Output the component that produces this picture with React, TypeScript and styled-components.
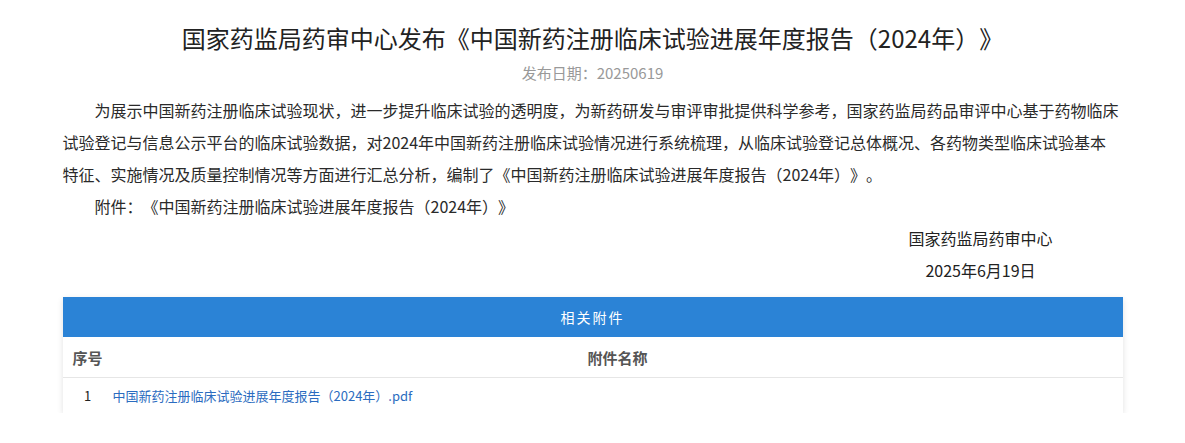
import React from 'react'
import styled, { createGlobalStyle } from 'styled-components'

const GlobalStyle = createGlobalStyle`
  body {
    margin: 0;
    background: #fff;
    font-family: "Noto Sans CJK SC", "Noto Sans", sans-serif;
    color: #333;
    text-spacing-trim: space-all;
  }
`

const Page = styled.div`
  width: 1060px;
  margin: 0 auto;
  padding-top: 18px;
`

const Title = styled.h1`
  margin: 0;
  font-size: 24px;
  line-height: 40px;
  font-weight: 400;
  color: #222;
  text-align: center;
`

const PubDate = styled.div`
  font-size: 15px;
  line-height: 30px;
  color: #999;
  text-align: center;
  margin-bottom: 6px;
`

const Para = styled.p`
  margin: 0;
  padding-right: 2px;
  font-size: 16px;
  line-height: 32px;
  text-indent: 2em;
  color: #2a2a2a;
`

const Sign = styled.div`
  display: flex;
  justify-content: flex-end;
  padding-right: 70px;
  margin-bottom: 11px;
`

const SignBlock = styled.div`
  text-align: center;
  font-size: 16px;
  line-height: 32px;
  color: #222;
`

const Table = styled.div`
  background: #fff;
  box-shadow: 0 2px 6px rgba(0, 0, 0, 0.12);
`

const Caption = styled.div`
  height: 40px;
  line-height: 40px;
  background: #2b83d6;
  color: #fff;
  font-size: 14px;
  letter-spacing: 2px;
  text-align: center;
`

const Row = styled.div<{ $head?: boolean }>`
  display: grid;
  grid-template-columns: 50px 1fr;
  align-items: center;
  height: ${(p) => (p.$head ? '40px' : '35px')};
  border-bottom: ${(p) => (p.$head ? '1px solid #e6e6e6' : 'none')};
`

const HeadCell = styled.div<{ $center?: boolean }>`
  font-size: 15px;
  font-weight: 700;
  color: #555;
  padding-left: ${(p) => (p.$center ? '0' : '10px')};
  text-align: ${(p) => (p.$center ? 'center' : 'left')};
`

const NumCell = styled.div`
  font-size: 13px;
  color: #222;
  text-align: center;
`

const FileLink = styled.a`
  font-size: 13px;
  color: #2b6cc0;
  text-decoration: none;
`

export default function App() {
  return (
    <>
      <GlobalStyle />
      <Page>
        <Title>国家药监局药审中心发布《中国新药注册临床试验进展年度报告（2024年）》</Title>
        <PubDate>发布日期：20250619</PubDate>
        <Para>
          为展示中国新药注册临床试验现状，进一步提升临床试验的透明度，为新药研发与审评审批提供科学参考，国家药监局药品审评中心基于药物临床试验登记与信息公示平台的临床试验数据，对2024年中国新药注册临床试验情况进行系统梳理，从临床试验登记总体概况、各药物类型临床试验基本特征、实施情况及质量控制情况等方面进行汇总分析，编制了《中国新药注册临床试验进展年度报告（2024年）》。
        </Para>
        <Para>附件：《中国新药注册临床试验进展年度报告（2024年）》</Para>
        <Sign>
          <SignBlock>
            <div>国家药监局药审中心</div>
            <div>2025年6月19日</div>
          </SignBlock>
        </Sign>
        <Table>
          <Caption>相关附件</Caption>
          <Row $head>
            <HeadCell>序号</HeadCell>
            <HeadCell $center>附件名称</HeadCell>
          </Row>
          <Row>
            <NumCell>1</NumCell>
            <FileLink href="#">中国新药注册临床试验进展年度报告（2024年）.pdf</FileLink>
          </Row>
        </Table>
      </Page>
    </>
  )
}
